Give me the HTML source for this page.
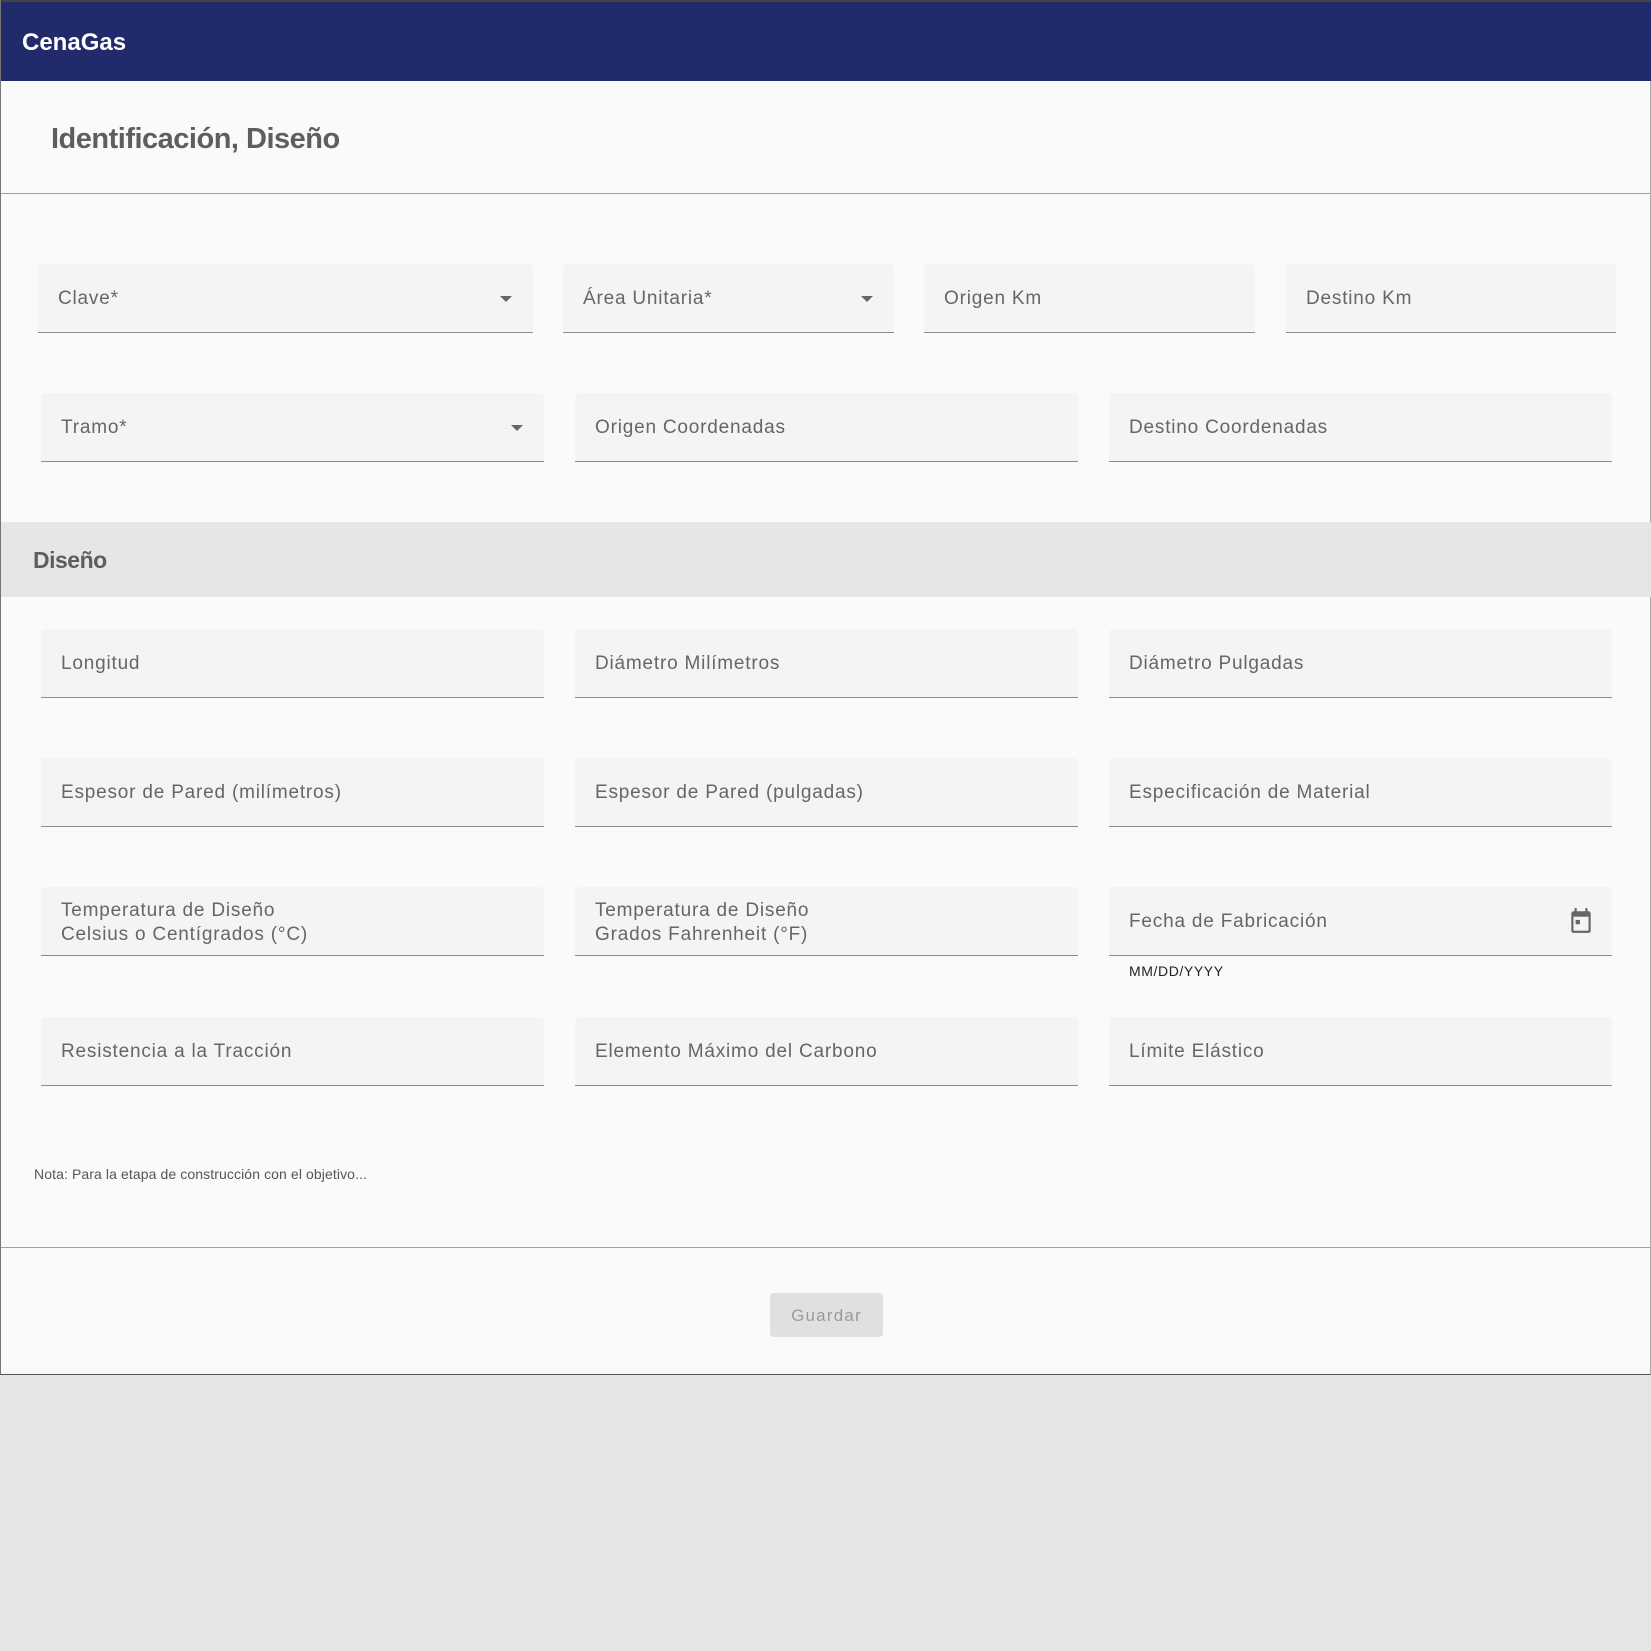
<!DOCTYPE html>
<html><head><meta charset="utf-8"><style>
*{box-sizing:border-box;margin:0;padding:0}
body{width:1651px;height:1651px;background:#e6e6e6;font-family:"Liberation Sans",Roboto,sans-serif;position:relative;overflow:hidden}
.page{position:absolute;left:0;top:0;width:1651px;height:1375px;background:#fafafa;border-bottom:1px solid #555;border-left:1px solid #777;border-right:1px solid #aaa}
.hdr{position:absolute;left:0;top:0;width:1651px;height:81px;background:#212a6a;border-top:2px solid #444}
.hdr span{position:absolute;left:21px;top:27px;color:#fff;font-size:24px;font-weight:bold}
.title{position:absolute;left:50px;top:123px;font-size:29px;font-weight:bold;color:#5e5e5e;letter-spacing:-0.5px}
.hr{position:absolute;left:0;width:1651px;height:1px;background:#a0a0a0}
.f{position:absolute;background:#f4f4f4;border-bottom:1px solid #8c8c8c;border-radius:4px 4px 0 0;height:69px}
.f span{position:absolute;left:20px;top:50%;transform:translateY(-46%);font-size:19px;color:#666;letter-spacing:0.8px;line-height:24px;white-space:nowrap}
.arr{position:absolute;right:21px;top:32px;width:0;height:0;border-left:6px solid transparent;border-right:6px solid transparent;border-top:6px solid #666}
.band{position:absolute;left:0;top:522px;width:1651px;height:75px;background:#e6e6e6}
.band span{position:absolute;left:32px;top:25px;font-size:23px;font-weight:bold;color:#5e5e5e;letter-spacing:-0.5px}
.btn{position:absolute;left:769px;top:1293px;width:113px;height:44px;background:#e0e0e0;border-radius:4px;color:#9a9a9a;font-size:17px;letter-spacing:1.2px;text-align:center;line-height:46px}
</style></head><body>
<div class="page">
<div class="hdr"><span>CenaGas</span></div>
<div class="title">Identificación, Diseño</div>
<div class="hr" style="top:193px"></div>

<div class="f" style="left:37px;top:264px;width:495px"><span>Clave*</span><div class="arr"></div></div>
<div class="f" style="left:562px;top:264px;width:331px"><span>Área Unitaria*</span><div class="arr"></div></div>
<div class="f" style="left:923px;top:264px;width:331px"><span>Origen Km</span></div>
<div class="f" style="left:1285px;top:264px;width:330px"><span>Destino Km</span></div>

<div class="f" style="left:40px;top:393px;width:503px"><span>Tramo*</span><div class="arr"></div></div>
<div class="f" style="left:574px;top:393px;width:503px"><span>Origen Coordenadas</span></div>
<div class="f" style="left:1108px;top:393px;width:503px"><span>Destino Coordenadas</span></div>

<div class="band"><span>Diseño</span></div>

<div class="f" style="left:40px;top:629px;width:503px"><span>Longitud</span></div>
<div class="f" style="left:574px;top:629px;width:503px"><span>Diámetro Milímetros</span></div>
<div class="f" style="left:1108px;top:629px;width:503px"><span>Diámetro Pulgadas</span></div>

<div class="f" style="left:40px;top:758px;width:503px"><span>Espesor de Pared (milímetros)</span></div>
<div class="f" style="left:574px;top:758px;width:503px"><span>Espesor de Pared (pulgadas)</span></div>
<div class="f" style="left:1108px;top:758px;width:503px"><span>Especificación de Material</span></div>

<div class="f" style="left:40px;top:887px;width:503px"><span>Temperatura de Diseño<br>Celsius o Centígrados (°C)</span></div>
<div class="f" style="left:574px;top:887px;width:503px"><span>Temperatura de Diseño<br>Grados Fahrenheit (°F)</span></div>
<div class="f" style="left:1108px;top:887px;width:503px"><span>Fecha de Fabricación</span>
<svg style="position:absolute;right:18px;top:20px" width="26" height="28" viewBox="0 0 24 26"><rect x="6" y="1" width="2" height="4" fill="#666"/><rect x="16" y="1" width="2" height="4" fill="#666"/><rect x="3" y="4" width="18" height="20" rx="2" fill="#666"/><rect x="5" y="9" width="14" height="13" fill="#f4f4f4"/><rect x="7" y="12" width="4" height="4" fill="#666"/></svg></div>
<div style="position:absolute;left:1128px;top:963px;font-size:14px;color:#222;letter-spacing:0.6px">MM/DD/YYYY</div>

<div class="f" style="left:40px;top:1017px;width:503px"><span>Resistencia a la Tracción</span></div>
<div class="f" style="left:574px;top:1017px;width:503px"><span>Elemento Máximo del Carbono</span></div>
<div class="f" style="left:1108px;top:1017px;width:503px"><span>Límite Elástico</span></div>

<div style="position:absolute;left:33px;top:1166px;font-size:14px;color:#555;letter-spacing:0.1px">Nota: Para la etapa de construcción con el objetivo...</div>
<div class="hr" style="top:1247px"></div>
<div class="btn">Guardar</div>
</div>
</body></html>
